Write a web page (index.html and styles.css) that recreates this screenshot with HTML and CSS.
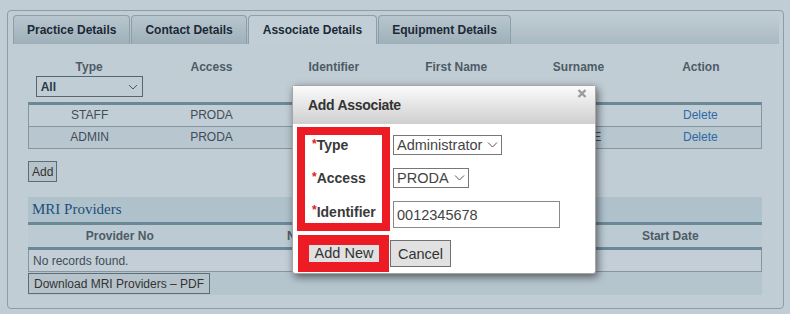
FILE: index.html
```html
<!DOCTYPE html>
<html lang="en">
<head>
  <meta charset="UTF-8" />
  <title>Associate Details</title>
  <link rel="stylesheet" href="styles.css">
</head>
<body>
  <div class="panel">
    <ul class="tabs">
      <li class="tab">Practice Details</li>
      <li class="tab">Contact Details</li>
      <li class="tab active">Associate Details</li>
      <li class="tab">Equipment Details</li>
    </ul>

    <div class="content">
      <table class="grid">
        <thead>
          <tr>
            <th>
              Type
              <div class="filter">
                <span>All</span>
                <svg width="10" height="6" viewBox="0 0 10 6"><path d="M1 1l4 4 4-4" fill="none" stroke="#555" stroke-width="1"/></svg>
              </div>
            </th>
            <th>Access</th>
            <th>Identifier</th>
            <th>First Name</th>
            <th>Surname</th>
            <th>Action</th>
          </tr>
        </thead>
        <tbody>
          <tr>
            <td>STAFF</td>
            <td>PRODA</td>
            <td></td>
            <td></td>
            <td>LEE</td>
            <td><a href="#" class="link">Delete</a></td>
          </tr>
          <tr class="alt">
            <td>ADMIN</td>
            <td>PRODA</td>
            <td></td>
            <td></td>
            <td>MOORE</td>
            <td><a href="#" class="link">Delete</a></td>
          </tr>
        </tbody>
      </table>

      <button class="btn add-btn">Add</button>

      <div class="mri">
        <div class="mri-title">MRI Providers</div>
        <table class="mri-grid">
          <thead>
            <tr>
              <th>Provider No</th>
              <th>Name</th>
              <th></th>
              <th>Start Date</th>
            </tr>
          </thead>
          <tbody>
            <tr>
              <td colspan="4">No records found.</td>
            </tr>
          </tbody>
        </table>
        <button class="btn pdf-btn">Download MRI Providers – PDF</button>
      </div>
    </div>
  </div>

  <div class="modal">
    <div class="modal-head">
      Add Associate
      <svg class="close" width="10" height="9" viewBox="0 0 10 9"><path d="M1.5 1l7 7M8.5 1l-7 7" stroke="#9b9b9b" stroke-width="2.4"/></svg>
    </div>
    <div class="modal-body">
      <div class="form">
        <div class="labels hl">
          <label class="lbl lbl-sm"><span class="req">*</span>Type</label>
          <label class="lbl lbl-sm"><span class="req">*</span>Access</label>
          <label class="lbl lbl-lg"><span class="req">*</span>Identifier</label>
        </div>
        <div class="fields">
          <div class="dropdown type-dd">
            <span>Administrator</span>
            <svg width="11" height="6" viewBox="0 0 11 6"><path d="M1 0.5l4.5 4.5 4.5-4.5" fill="none" stroke="#555" stroke-width="1"/></svg>
          </div>
          <div class="dropdown access-dd">
            <span>PRODA</span>
            <svg width="11" height="6" viewBox="0 0 11 6"><path d="M1 0.5l4.5 4.5 4.5-4.5" fill="none" stroke="#555" stroke-width="1"/></svg>
          </div>
          <input type="text" class="text-input" value="0012345678">
        </div>
      </div>
      <div class="actions">
        <div class="hl-btn"><button class="mbtn add-new">Add New</button></div>
        <button class="mbtn cancel">Cancel</button>
      </div>
    </div>
  </div>
</body>
</html>
```

FILE: styles.css
```css
body {
  margin: 0;
  padding: 10px 6px 0 7px;
  background: #c1cdd5;
  font-family: 'Liberation Sans', Arial, sans-serif;
  font-size: 12px;
  color: #3f4d58;
}

.panel {
  border: 1px solid #8d9ca6;
  border-radius: 4px;
  padding: 4px 4px 0 5px;
  height: 299px;
  box-sizing: border-box;
}

.tabs {
  list-style: none;
  margin: 0;
  padding: 0;
  display: flex;
  gap: 1px;
  height: 29px;
  background: linear-gradient(#c0ccd4, #a9bac3);
  border-radius: 3px 3px 0 0;
}

.tab {
  height: 29px;
  box-sizing: border-box;
  line-height: 28px;
  padding: 0 13px;
  border: 1px solid #8f9fa9;
  border-bottom: none;
  border-radius: 4px 4px 0 0;
  background: linear-gradient(#b8c6ce, #9fb0ba);
  font-weight: bold;
  color: #1b2937;
}

.tab.active {
  background: #c2ced6;
  padding: 0 14px;
}

.content {
  margin: 0 17px 0 15px;
  padding-top: 16px;
}

.grid {
  width: 100%;
  table-layout: fixed;
  border-spacing: 0;
}

.grid th {
  font-weight: bold;
  color: #4d5b66;
  line-height: 14px;
  padding: 0 0 5px;
  vertical-align: top;
}

.filter {
  width: 107px;
  height: 21px;
  box-sizing: border-box;
  margin: 2px auto 0;
  border: 1px solid #56666f;
  display: flex;
  align-items: center;
  justify-content: space-between;
  padding: 0 4px 0 4px;
  color: #2b3944;
  text-align: left;
}

.grid td {
  text-align: center;
  line-height: 15px;
  padding: 3px 4px;
  border-bottom: 1px solid #8696a0;
  background: #c2ced6;
}

.grid tbody tr:first-child td {
  border-top: 3px solid #6b8897;
}

.grid td:first-child {
  border-left: 1px solid #8696a0;
}

.grid td:last-child {
  border-right: 1px solid #8696a0;
}

.grid tr.alt td {
  background: #b7c6cf;
}

.link {
  color: #2b6aa6;
  text-decoration: none;
}

.btn {
  display: block;
  font-family: 'Liberation Sans', Arial, sans-serif;
  font-size: 12px;
  color: #333;
  background: #b6c3cb;
  border: 1px solid #5d6d77;
  border-radius: 0;
  padding: 0 3px;
  height: 21px;
}

.add-btn {
  margin-top: 12px;
}

.mri {
  margin-top: 15px;
  background: #b5c5ce;
  padding-bottom: 1px;
}

.mri-title {
  height: 25px;
  line-height: 25px;
  padding-left: 4px;
  background: #afc2cc;
  font-family: 'Liberation Serif', Georgia, serif;
  font-size: 15px;
  color: #1d4e7a;
}

.mri-grid {
  width: 100%;
  table-layout: fixed;
  border-spacing: 0;
}

.mri-grid th {
  height: 22px;
  padding: 0;
  font-weight: bold;
  color: #4d5b66;
  background: #bccbd3;
  border-top: 3px solid #6b8897;
  border-bottom: 3px solid #6b8897;
}

.mri-grid td {
  height: 21px;
  padding: 0 4px;
  background: #c3ced6;
  border: 1px solid #8696a0;
  border-top: none;
}

.pdf-btn {
  margin-top: 1px;
  width: 182px;
}

.modal {
  position: absolute;
  left: 292px;
  top: 85px;
  width: 304px;
  box-sizing: border-box;
  background: #fff;
  border: 1px solid #a5a5a5;
  border-radius: 3px;
  box-shadow: 2px 3px 8px rgba(0, 0, 0, 0.55);
}

.modal-head {
  position: relative;
  height: 38px;
  line-height: 39px;
  padding-left: 15px;
  background: linear-gradient(#fbfbfb, #cfcfcf);
  font-size: 14px;
  font-weight: bold;
  color: #333;
  letter-spacing: -0.3px;
}

.close {
  position: absolute;
  top: 3px;
  right: 8px;
}

.modal-body {
  padding: 3px 0 1px 4px;
}

.form {
  display: flex;
  gap: 3px;
}

.hl {
  border: 8px solid #ed1c24;
}

.labels {
  padding-left: 7px;
  width: 70px;
  display: flex;
  flex-direction: column;
  gap: 13px;
}

.lbl {
  font-size: 14px;
  font-weight: bold;
  color: #3a3a3a;
  display: flex;
  align-items: center;
}

.lbl-sm {
  height: 20px;
}

.lbl-lg {
  height: 22px;
}

.req {
  color: #e02020;
  font-size: 12px;
  align-self: flex-start;
  margin-top: 2px;
}

.fields {
  padding-top: 8px;
  display: flex;
  flex-direction: column;
  align-items: flex-start;
  gap: 13px;
  font-size: 14.5px;
  color: #444;
}

.dropdown {
  height: 20px;
  box-sizing: border-box;
  border: 1px solid #777;
  display: flex;
  align-items: center;
  justify-content: space-between;
  padding: 0 3px;
}

.type-dd {
  width: 109px;
}

.access-dd {
  width: 76px;
}

.text-input {
  width: 167px;
  height: 27px;
  box-sizing: border-box;
  border: 1px solid #8a8a8a;
  padding: 0 3px;
  margin: 0;
  font-family: 'Liberation Sans', Arial, sans-serif;
  font-size: 14.5px;
  color: #444;
}

.actions {
  margin-top: 4px;
  margin-left: 1px;
  display: flex;
  align-items: center;
  gap: 1px;
}

.hl-btn {
  border: 10px solid #ed1c24;
  border-left-width: 11px;
}

.mbtn {
  font-family: 'Liberation Sans', Arial, sans-serif;
  font-size: 14.5px;
  color: #333;
  background: #e1e1e1;
  margin: 0;
  border-radius: 0;
}

.add-new {
  display: block;
  width: 70px;
  height: 17px;
  padding: 0;
  border: none;
  line-height: 17px;
}

.cancel {
  width: 61px;
  height: 27px;
  padding: 0;
  border: 1px solid #707070;
}
```
